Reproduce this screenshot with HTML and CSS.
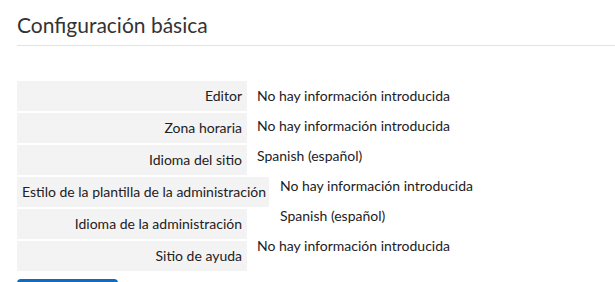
FILE: index.html
```html
<!DOCTYPE html>
<html lang="es">
<head>
  <meta charset="UTF-8" />
  <title>Configuración básica</title>
  <link rel="stylesheet" href="styles.css">
</head>
<body>

<div class="page">
  <h2 class="title">Configuración básica</h2>

  <div class="settings">
    <div class="labels">
      <div class="label">Editor</div>
      <div class="label">Zona horaria</div>
      <div class="label">Idioma del sitio</div>
      <div class="label wide">Estilo de la plantilla de la administración</div>
      <div class="label">Idioma de la administración</div>
      <div class="label">Sitio de ayuda</div>
    </div>
    <div class="values">
      <div class="value">No hay información introducida</div>
      <div class="value">No hay información introducida</div>
      <div class="value">Spanish (español)</div>
      <div class="value shifted">No hay información introducida</div>
      <div class="value shifted">Spanish (español)</div>
      <div class="value">No hay información introducida</div>
    </div>
  </div>

  <button type="button" class="edit-btn">Editar</button>
</div>

</body>
</html>
```

FILE: styles.css
```css
* {
  box-sizing: border-box;
  margin: 0;
  padding: 0;
  font-family: 'Lato', sans-serif;
}

body {
  background: #ffffff;
  color: #1d2125;
}

.page {
  padding: 12px 0 0 17px;
}

.title {
  font-size: 21px;
  font-weight: 400;
  line-height: 26px;
  color: #333333;
  padding-bottom: 7px;
  border-bottom: 1px solid #e3e3e3;
}

.settings {
  display: flex;
  margin-top: 35px;
  font-size: 14px;
}

.labels {
  width: 230px;
  display: flex;
  flex-direction: column;
  gap: 2px;
}

.label {
  height: 30px;
  line-height: 30px;
  padding: 0 5px;
  text-align: right;
  background: #f3f3f3;
  white-space: nowrap;
}

.label.wide {
  width: 252px;
  padding: 0 7px 0 5px;
  text-align: left;
}

.value {
  height: 30px;
  line-height: 30px;
  padding-left: 10px;
  white-space: nowrap;
}

.value.shifted {
  padding-left: 33px;
}

.edit-btn {
  margin-top: 8px;
  width: 101px;
  padding: 12px 0;
  border: none;
  border-radius: 4px;
  background: #0f6cbf;
  color: #ffffff;
  font-size: 14px;
  line-height: 20px;
}
```
